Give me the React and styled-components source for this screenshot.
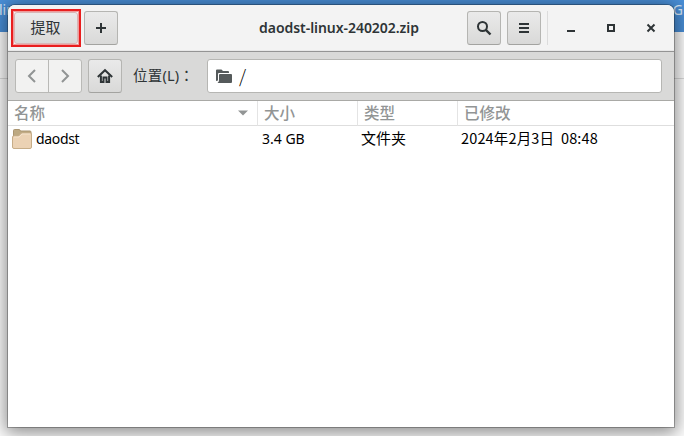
import React from 'react';
import styled, { createGlobalStyle } from 'styled-components';

const GlobalStyle = createGlobalStyle`
  * { box-sizing: border-box; }
  body { margin: 0; overflow: hidden; font-family: "Noto Sans", "Noto Sans CJK SC", sans-serif; }
`;

const Desktop = styled.div`
  position: relative;
  width: 684px;
  height: 436px;
  overflow: hidden;
  background: #fff;
`;

const BackTitle = styled.div`
  height: 32px;
  display: flex;
  justify-content: space-between;
  margin: 0 -8px 0 -1px;
  background: #4a90d9;
  color: #dcebfa;
  font-size: 14px;
  line-height: 19px;
  white-space: pre;
`;

const BackRow = styled.div`
  height: 47px;
  border-bottom: 1px solid #ddd;
`;

const Window = styled.main`
  position: absolute;
  left: 8px;
  top: 5px;
  width: 666px;
  height: 422px;
  display: flex;
  flex-direction: column;
  overflow: hidden;
  background: #fff;
  border-radius: 7px 7px 0 0;
  box-shadow: 0 0 0 1px rgba(0, 0, 0, 0.27), 0 3px 18px 3px rgba(0, 0, 0, 0.46);
`;

const HeaderBar = styled.header`
  height: 47px;
  flex: none;
  display: flex;
  align-items: flex-start;
  padding: 6px 3px 0;
  background: #f3f3f3;
  border-bottom: 1px solid #949494;
  box-shadow: inset 0 -1px #e8e8e8;
`;

const Button = styled.button`
  width: ${(p) => p.$width || 34}px;
  height: 34px;
  display: flex;
  align-items: center;
  justify-content: center;
  padding: 0;
  border: 1px solid #b5b5b2;
  border-bottom-color: #a3a3a0;
  border-radius: 3px;
  background: linear-gradient(#eaeaea, #d9d9d8);
  color: #2e3436;
  font: 15px/20px "Noto Sans", "Noto Sans CJK SC", sans-serif;
`;

const Highlight = styled.div`
  width: 70px;
  height: 38px;
  margin: -2px 3px 0 0;
  padding: 1px;
  border: 2px solid #e91e1e;
  box-shadow: inset 0 0 0 1px #f09a9a;

  ${Button} {
    height: 32px;
    padding-bottom: 3px;
    padding-right: 1px;
    border-color: #d9b5b5;
  }
`;

const Title = styled.h1`
  flex: 1;
  margin: 0;
  padding-top: 6px;
  padding-left: 93px;
  text-align: center;
  color: #2e3436;
  font-size: 14px;
  font-weight: 600;
  line-height: 22px;
  letter-spacing: -0.05px;
  white-space: nowrap;
`;

const HeaderActions = styled.div`
  display: flex;
  gap: 6px;
  padding-right: 6px;
  border-right: 1px solid #dcdcdc;
`;

const WindowControls = styled.div`
  display: flex;
  width: 123px;
  padding-left: 3px;
`;

const ControlButton = styled.button`
  width: 40px;
  height: 34px;
  display: grid;
  place-items: center;
  padding: 0;
  border: 0;
  background: none;
`;

const Toolbar = styled.nav`
  height: 49px;
  flex: none;
  display: flex;
  align-items: flex-start;
  padding: 7px 12px 0 7px;
  background: #d9d9d8;
  border-bottom: 1px solid #a9a9a6;
`;

const HistoryButtons = styled.div`
  display: flex;
  width: 67px;
  height: 34px;
  margin-right: 6px;
  border: 1px solid #b9b9b6;
  border-radius: 3px;
  background: #f2f2f1;
`;

const HistoryButton = styled.button`
  flex: 1;
  display: grid;
  place-items: center;
  padding: 0;
  border: 0;
  background: none;

  & + & { border-left: 1px solid #b9b9b6; }
`;

const LocationLabel = styled.label`
  width: 77px;
  margin-left: 11px;
  padding-top: 5px;
  color: #2e3436;
  font-size: 14.5px;
  line-height: 22px;
  letter-spacing: 0.2px;
  white-space: nowrap;
`;

const CenteredColon = styled.span`
  font-family: "Noto Sans CJK TC", sans-serif;
`;

const LocationField = styled.div`
  flex: 1;
  height: 34px;
  display: flex;
  align-items: center;
  gap: 7px;
  margin-left: -3px;
  padding: 0 0 2px 8px;
  border: 1px solid #b6b6b3;
  border-radius: 3px;
  background: #fff;
  font: 300 18px/24px "Noto Sans CJK SC", sans-serif;

  svg { margin-top: 2px; }
`;

const FileTable = styled.section`
  display: grid;
  grid-template-columns: 250px 100px 100px 1fr;
  grid-template-rows: 25px 26px;
`;

const ColumnHeader = styled.div`
  display: flex;
  align-items: center;
  justify-content: space-between;
  padding: 0 9px 2px 6px;
  border-right: ${(p) => (p.$last ? '0' : '1px solid #e4e4e4')};
  border-bottom: 1px solid #dedede;
  color: #929595;
  font-size: 15.5px;
  font-weight: 500;

  svg { margin-top: 2px; }
`;

const Cell = styled.div`
  display: flex;
  align-items: center;
  gap: 4px;
  padding-left: 4px;
  color: #000;
  font-size: 14px;
  letter-spacing: ${(p) => p.$spacing || 0}px;
  line-height: 22px;
  white-space: pre;
`;

const CjkCell = styled(Cell)`
  padding-left: 3px;
  padding-bottom: 2px;
  font-family: "Noto Sans CJK SC", sans-serif;
  font-size: ${(p) => p.$size}px;
`;

function Icon({ width = 16, height = 16, children }) {
  return (
    <svg width={width} height={height} viewBox={`0 0 ${width} ${height}`} fill="none" stroke="#2e3436" strokeWidth="2">
      {children}
    </svg>
  );
}

const SortArrow = () => (
  <Icon width={10} height={6}><path d="M0 .5h10l-5 5Z" fill="#929595" stroke="none" /></Icon>
);

const FolderIcon = () => (
  <Icon width={20} height={22}>
    <path d="M1.5 18V2.5Q1.5 1.5 2.5 1.5H7Q8 1.5 8.5 3H18Q19 3 19 4V18Z" fill="#bda982" stroke="#aa9570" strokeWidth="1" />
    <path d="M.5 9Q.5 8 1.5 8H6.5L9.5 5H18.5Q19.5 5 19.5 6V19Q19.5 20.5 18 20.5H2Q.5 20.5.5 19Z" fill="#ebd2b4" stroke="#c6ad88" strokeWidth="1" />
    <path d="M2 9H7L10 6H18" stroke="#f5e3cc" strokeWidth="1" />
  </Icon>
);

export default function App() {
  return (
    <>
      <GlobalStyle />
      <Desktop>
        <BackTitle><span>linux-240202</span><span>3.3 GB</span></BackTitle>
        <BackRow />
        <Window>
          <HeaderBar>
            <Highlight><Button $width={64}>提取</Button></Highlight>
            <Button aria-label="添加"><Icon><path d="M8 3v10M3 8h10" /></Icon></Button>
            <Title>daodst-linux-240202.zip</Title>
            <HeaderActions>
              <Button aria-label="搜索"><Icon><circle cx="6.5" cy="6.5" r="4.5" /><path d="m9.8 9.8 4.7 4.7" strokeWidth="2.4" /></Icon></Button>
              <Button aria-label="菜单"><Icon><path d="M3 4h10M3 8h10M3 12h10" /></Icon></Button>
            </HeaderActions>
            <WindowControls>
              <ControlButton aria-label="最小化"><Icon><path d="M4 11h8" /></Icon></ControlButton>
              <ControlButton aria-label="最大化"><Icon><path d="M5 5h6v6H5Z" /></Icon></ControlButton>
              <ControlButton aria-label="关闭"><Icon><path d="m4.5 4.5 7 7m0-7-7 7" /></Icon></ControlButton>
            </WindowControls>
          </HeaderBar>
          <Toolbar>
            <HistoryButtons>
              <HistoryButton aria-label="后退"><Icon><path d="m11 2-6 6 6 6" stroke="#919494" /></Icon></HistoryButton>
              <HistoryButton aria-label="前进"><Icon><path d="m5 2 6 6-6 6" stroke="#919494" /></Icon></HistoryButton>
            </HistoryButtons>
            <Button aria-label="主目录">
              <Icon>
                <path d="m.8 8.9 7.2-6.7 7.2 6.7" />
                <path d="M3.9 7.5V14H6.5V9.5h3V14h2.6V7.5" />
              </Icon>
            </Button>
            <LocationLabel>位置(L)<CenteredColon>：</CenteredColon></LocationLabel>
            <LocationField>
              <Icon>
                <path d="M0 13V2.5Q0 1.5 1 1.5H5.5L7 3H12Q13 3 13 4V5H3Q2 5 2 6V12.5Z" fill="#555a5b" stroke="none" />
                <path d="M3 7Q3 6 4 6H15Q16 6 16 7V14Q16 15 15 15H1.5Q3 14 3 12Z" fill="#555a5b" stroke="none" />
              </Icon>
              <span>/</span>
            </LocationField>
          </Toolbar>
          <FileTable>
            <ColumnHeader>名称<SortArrow /></ColumnHeader>
            <ColumnHeader>大小</ColumnHeader>
            <ColumnHeader>类型</ColumnHeader>
            <ColumnHeader $last>已修改</ColumnHeader>
            <Cell $spacing={-0.35}><FolderIcon />daodst</Cell>
            <Cell>3.4 GB</Cell>
            <CjkCell $size={15}>文件夹</CjkCell>
            <CjkCell $size={14.5} $spacing={0.15}>2024年2月3日  08:48</CjkCell>
          </FileTable>
        </Window>
      </Desktop>
    </>
  );
}
